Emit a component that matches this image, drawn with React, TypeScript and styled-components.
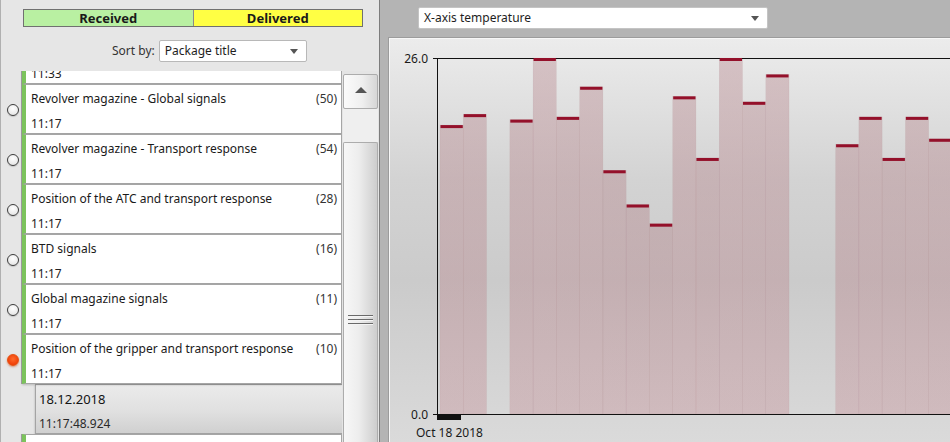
import React from 'react'
import styled, { createGlobalStyle } from 'styled-components'

const FONT = `"Noto Sans", "Open Sans", sans-serif`

const GlobalStyle = createGlobalStyle`
  html, body {
    margin: 0;
    padding: 0;
  }
  body {
    background: #b4b4b4;
    font-family: ${FONT};
    color: #1e1e1e;
  }
`

const Screen = styled.div`
  display: flex;
  width: 950px;
  height: 442px;
  overflow: hidden;
`

/* ---------- left: package list ---------- */

const Sidebar = styled.aside`
  display: flex;
  flex-direction: column;
  flex-shrink: 0;
  width: 380px;
  box-sizing: border-box;
  background: #e6e6e6;
  border-left: 1px solid #b0b0b0;
  border-right: 1px solid #7d7d7d;
`

const Legend = styled.div`
  display: flex;
  width: 340px;
  height: 18px;
  margin: 9px 0 0 22px;
  box-sizing: border-box;
  border: 1px solid #707070;
`

const LegendCell = styled.div<{ $color: string }>`
  flex: 1;
  background: ${(p) => p.$color};
  font-size: 13px;
  font-weight: 700;
  line-height: 16px;
  text-align: center;
  color: #1a1a1a;

  & + & {
    border-left: 1px solid #8a8a8a;
  }
`

const SortRow = styled.div`
  display: flex;
  align-items: center;
  gap: 4px;
  height: 22px;
  margin-top: 13px;
  padding-left: 111px;
  font-size: 12px;
  line-height: 16px;
  color: #333;
`

const Select = styled.div<{ $width: number }>`
  display: flex;
  align-items: center;
  justify-content: space-between;
  width: ${(p) => p.$width}px;
  height: 22px;
  box-sizing: border-box;
  padding: 0 8px 0 5px;
  background: #fff;
  border: 1px solid #b8b8b8;
  border-radius: 2px;
  font-size: 12px;
  line-height: 16px;
  color: #1e1e1e;
`

const Caret = styled.span`
  width: 0;
  height: 0;
  border-left: 4px solid transparent;
  border-right: 4px solid transparent;
  border-top: 5px solid #555;
`

const ListArea = styled.div`
  display: flex;
  flex: 1;
  min-height: 0;
  margin-top: 9px;
`

const Viewport = styled.div`
  width: 341px;
  overflow: hidden;
`

const ListInner = styled.div<{ $offset: number }>`
  margin-top: ${(p) => -p.$offset}px;
`

const Row = styled.div`
  display: flex;
  height: 50px;
`

const Gutter = styled.div`
  display: flex;
  align-items: center;
  width: 21px;
  flex-shrink: 0;
  box-sizing: border-box;
  padding: 1px 0 0 6px;
`

const Radio = styled.span<{ $active?: boolean }>`
  width: 12px;
  height: 12px;
  box-sizing: border-box;
  border-radius: 50%;
  border: 1px solid ${(p) => (p.$active ? '#e5500f' : '#3c3c3c')};
  background: ${(p) =>
    p.$active
      ? 'radial-gradient(circle at 50% 40%, #ff6a2a, #f0400a 70%)'
      : 'radial-gradient(circle at 50% 35%, #ffffff, #e6e6e6 80%)'};
  box-shadow: ${(p) => (p.$active ? '0 1px 2px rgba(200, 60, 0, 0.5)' : '0 1px 1px rgba(0, 0, 0, 0.15)')};
`

const Card = styled.div`
  flex: 1;
  height: 50px;
  box-sizing: border-box;
  padding: 6px 4px 0 5px;
  background: #fff;
  border: 1px solid #a6a6a6;
  border-left: 4px solid #7cc35c;
  box-shadow: -1px 0 0 #9a9a9a, 0 1px 2px rgba(0, 0, 0, 0.2);
  font-size: 12px;
  line-height: 16px;
  color: #1a1a1a;
`

const TitleLine = styled.div`
  display: flex;
  justify-content: space-between;
  height: 16px;
  white-space: nowrap;
`

const Count = styled.span`
  color: #333;
`

const TimeLine = styled.div`
  margin-top: 9px;
  color: #222;
`

const Detail = styled.div`
  height: 50px;
  margin-left: 34px;
  box-sizing: border-box;
  padding: 6px 0 0 3px;
  background: linear-gradient(180deg, #ebebeb 0%, #e0e0e0 55%, #d0d0d0 100%);
  border: 1px solid #a4a4a4;
  border-right: none;
  box-shadow: 0 1px 2px rgba(0, 0, 0, 0.25);
  font-size: 12px;
  line-height: 16px;
`

const DetailDate = styled.div`
  font-size: 13px;
  color: #141414;
`

const DetailTime = styled.div`
  margin-top: 9px;
  color: #2a2a2a;
`

const Scrollbar = styled.div`
  display: flex;
  flex-direction: column;
  width: 37px;
  box-sizing: border-box;
  padding: 3px 1px 0 1px;
  background: #e4e4e4;
`

const ScrollButton = styled.div`
  display: flex;
  align-items: center;
  justify-content: center;
  height: 35px;
  box-sizing: border-box;
  border: 1px solid #acacac;
  border-radius: 2px;
  background: linear-gradient(90deg, #fbfbfb 0%, #efefef 55%, #d6d6d6 100%);
`

const UpArrow = styled.span`
  width: 0;
  height: 0;
  margin-top: -3px;
  border-left: 6px solid transparent;
  border-right: 6px solid transparent;
  border-bottom: 6px solid #555;
`

const Track = styled.div`
  height: 33px;
  background: #efefef;
`

const Thumb = styled.div`
  flex: 1;
  display: flex;
  justify-content: center;
  box-sizing: border-box;
  border: 1px solid #acacac;
  border-bottom: none;
  border-radius: 2px 2px 0 0;
  background: linear-gradient(90deg, #f7f7f7 0%, #ededed 45%, #cdcdcd 100%);
`

const Grip = styled.div`
  width: 25px;
  height: 10px;
  margin-top: 172px;
  background: repeating-linear-gradient(180deg, #6a6a6a 0 1px, #f4f4f4 1px 2px, transparent 2px 4px);
`

/* ---------- right: chart ---------- */

const ChartPane = styled.main`
  display: flex;
  flex-direction: column;
  flex: 1;
  min-width: 0;
  padding-top: 7px;
  background: #b4b4b4;
`

const AxisSelect = styled(Select)`
  margin-left: 38px;
  border-color: #c4c4c4;
`

const ChartPanel = styled.section`
  flex: 1;
  margin: 8px 0 0 8px;
  border-top: 1px solid #9c9c9c;
  border-left: 1px solid #9c9c9c;
  box-shadow: inset 1px 1px 0 #f7f7f7;
  background: linear-gradient(180deg, #ececec 0%, #d3d3d3 35%, #cbcbcb 60%, #dadada 100%);
  overflow: hidden;
`

const ChartSvg = styled.svg`
  display: block;
  font-family: ${FONT};
  font-size: 12px;
`

type Pkg = { title: string; count: number; time: string; active?: boolean }

// the list is scrolled: only the time of the first entry shows, and only the top edge of the last one
const firstTime = '11:33'

const packages: Pkg[] = [
  { title: 'Revolver magazine - Global signals', count: 50, time: '11:17' },
  { title: 'Revolver magazine - Transport response', count: 54, time: '11:17' },
  { title: 'Position of the ATC and transport response', count: 28, time: '11:17' },
  { title: 'BTD signals', count: 16, time: '11:17' },
  { title: 'Global magazine signals', count: 11, time: '11:17' },
  { title: 'Position of the gripper and transport response', count: 10, time: '11:17', active: true },
]

// null = no sample in that slot
const temps: (number | null)[] = [
  21.1, 21.9, null, 21.5, 26.0, 21.7, 23.9, 17.8, 15.3, 13.9, 23.2, 18.7, 26.0, 22.8, 24.8,
  null, null, 19.7, 21.7, 18.7, 21.7, 20.1,
]

const PackageRow: React.FC<{ pkg?: Pkg; time?: string }> = ({ pkg, time }) => (
  <Row>
    <Gutter>
      <Radio $active={pkg?.active} />
    </Gutter>
    <Card>
      <TitleLine>
        {pkg && (
          <>
            <span>{pkg.title}</span>
            <Count>({pkg.count})</Count>
          </>
        )}
      </TitleLine>
      {(pkg || time) && <TimeLine>{pkg ? pkg.time : time}</TimeLine>}
    </Card>
  </Row>
)

const TemperatureChart: React.FC = () => {
  const W = 561
  const H = 405
  const axisX = 48
  const yTop = 20
  const yBottom = 376
  const barX = 51
  const slot = 23.27
  const max = 26
  const toY = (v: number) => yBottom - (v / max) * (yBottom - yTop)

  return (
    <ChartSvg width={W} height={H} viewBox={`0 0 ${W} ${H}`}>
      <defs>
        <linearGradient id="barFill" x1="0" y1="0" x2="0" y2="1">
          <stop offset="0" stopColor="rgba(172, 112, 120, 0.33)" />
          <stop offset="1" stopColor="rgba(190, 120, 130, 0.3)" />
        </linearGradient>
      </defs>
      {temps.map((v, i) =>
        v === null ? null : (
          <rect
            key={i}
            x={barX + i * slot}
            y={toY(v)}
            width={slot}
            height={yBottom - toY(v)}
            fill="url(#barFill)"
            stroke="rgba(150, 100, 108, 0.12)"
            strokeWidth={0.5}
          />
        )
      )}
      <line x1={44} y1={yTop + 0.5} x2={W} y2={yTop + 0.5} stroke="#111" strokeWidth={1} />
      <line x1={44} y1={yBottom + 0.5} x2={W} y2={yBottom + 0.5} stroke="#111" strokeWidth={1} />
      <line x1={axisX + 0.5} y1={yTop} x2={axisX + 0.5} y2={yBottom + 1} stroke="#111" strokeWidth={1} />
      {temps.map((v, i) =>
        v === null ? null : (
          <rect key={i} x={barX + i * slot + 0.5} y={toY(v)} width={slot - 1} height={3} fill="#94102a" />
        )
      )}
      <rect x={axisX} y={yBottom} width={24} height={6} fill="#111" />
      <text x={39} y={yTop + 4.5} textAnchor="end" fill="#1a1a1a">
        26.0
      </text>
      <text x={39} y={yBottom + 4.5} textAnchor="end" fill="#1a1a1a">
        0.0
      </text>
      <text x={27} y={399} fill="#1a1a1a">
        Oct 18 2018
      </text>
    </ChartSvg>
  )
}

export default function App() {
  return (
    <>
      <GlobalStyle />
      <Screen>
        <Sidebar>
          <Legend>
            <LegendCell $color="#b9f0a2">Received</LegendCell>
            <LegendCell $color="#ffff44">Delivered</LegendCell>
          </Legend>
          <SortRow>
            <span>Sort by:</span>
            <Select $width={148}>
              <span>Package title</span>
              <Caret />
            </Select>
          </SortRow>
          <ListArea>
            <Viewport>
              <ListInner $offset={37}>
                <PackageRow time={firstTime} />
                {packages.map((p) => (
                  <PackageRow key={p.title} pkg={p} />
                ))}
                <Detail>
                  <DetailDate>18.12.2018</DetailDate>
                  <DetailTime>11:17:48.924</DetailTime>
                </Detail>
                <PackageRow />
              </ListInner>
            </Viewport>
            <Scrollbar>
              <ScrollButton>
                <UpArrow />
              </ScrollButton>
              <Track />
              <Thumb>
                <Grip />
              </Thumb>
            </Scrollbar>
          </ListArea>
        </Sidebar>
        <ChartPane>
          <AxisSelect $width={350}>
            <span>X-axis temperature</span>
            <Caret />
          </AxisSelect>
          <ChartPanel>
            <TemperatureChart />
          </ChartPanel>
        </ChartPane>
      </Screen>
    </>
  )
}
